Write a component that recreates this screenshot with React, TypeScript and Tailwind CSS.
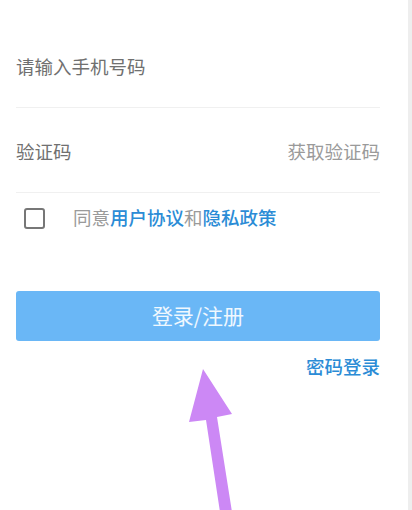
import { useState } from 'react';

const App = () => {
  const [agreed, setAgreed] = useState(false);

  return (
    <div
      className="relative flex h-[510px] w-full overflow-hidden bg-white"
      style={{ fontFamily: '"Noto Sans CJK SC", "Noto Sans", sans-serif' }}
    >
      <div className="flex-1 pl-4 pr-7">
        {/* Phone */}
        <div className="flex h-[108px] items-center border-b border-[#f0f0f0] pt-[27px]">
          <span className="text-[18.5px] text-[#707070]">请输入手机号码</span>
        </div>

        {/* Code */}
        <div className="flex h-[85px] items-center justify-between border-b border-[#f0f0f0] pt-[4px]">
          <span className="text-[18.5px] text-[#707070]">验证码</span>
          <span className="text-[18.5px] text-[#9a9a9a]">获取验证码</span>
        </div>

        {/* Agreement */}
        <div className="flex h-[50px] items-center">
          <button
            onClick={() => setAgreed(!agreed)}
            className="ml-2 h-[21px] w-[21px] rounded-[3px] border-2 border-[#777777]"
          />
          <p className="ml-[28px] text-[18.5px] text-[#9a9a9a]">
            同意<span className="font-medium text-[#2b8cd6]">用户协议</span>和
            <span className="font-medium text-[#2b8cd6]">隐私政策</span>
          </p>
        </div>

        {/* Submit */}
        <button className="mt-[48px] flex h-[50px] w-full items-center justify-center rounded-[3px] bg-[#6ab7f6] text-[21px] text-white/90">
          登录/注册
        </button>

        <div className="mt-[12px] flex justify-end">
          <span className="text-[18.5px] font-medium text-[#2b8cd6]">密码登录</span>
        </div>
      </div>
      <div className="w-[4px] bg-[#eeeeee]" />

      {/* annotation arrow */}
      <svg className="pointer-events-none absolute left-0 top-0" width="412" height="510" viewBox="0 0 412 510">
        <polygon
          points="203,369 232,414 217,417 232,512 220,512 206,420 189,422"
          fill="#cc88f5"
        />
      </svg>
    </div>
  );
};

export default App;
